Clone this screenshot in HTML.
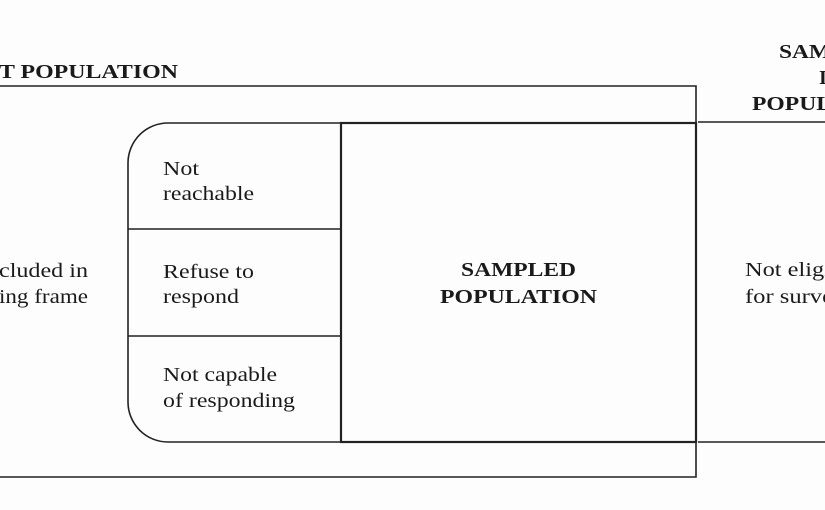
<!DOCTYPE html>
<html><head><meta charset="utf-8"><style>
html,body{margin:0;padding:0;background:#fdfdfd;}
svg{display:block}
text{font-family:"Liberation Serif",serif;fill:#1a1a1a;font-size:20px}
.b{font-weight:bold}
</style></head><body>
<svg width="825" height="510" viewBox="0 0 825 510" xmlns="http://www.w3.org/2000/svg">
<g fill="none" stroke="#222" stroke-width="1.6">
<path d="M0 86 H696 V477 H0"/>
<path d="M340 123 H168 A40 40 0 0 0 128 163 V402 A40 40 0 0 0 168 442 H340"/>
<path d="M128 229 H340 M128 336 H340"/>
<rect x="341" y="123" width="355" height="319" stroke-width="2.2"/>
<path d="M698 122 H825 M698 442 H825"/>
</g>
<text class="b" x="-1" y="78" textLength="179" lengthAdjust="spacingAndGlyphs">T POPULATION</text>
<text class="b" x="779" y="58" textLength="52" lengthAdjust="spacingAndGlyphs">SAM</text>
<text class="b" x="819" y="84">I</text>
<text class="b" x="752" y="110" textLength="80" lengthAdjust="spacingAndGlyphs">POPUL</text>
<text x="-1" y="277" textLength="89" lengthAdjust="spacingAndGlyphs">cluded in</text>
<text x="-1" y="303" textLength="89" lengthAdjust="spacingAndGlyphs">ing frame</text>
<text x="163" y="175" textLength="36" lengthAdjust="spacingAndGlyphs">Not</text>
<text x="163" y="200" textLength="91" lengthAdjust="spacingAndGlyphs">reachable</text>
<text x="163" y="278" textLength="91" lengthAdjust="spacingAndGlyphs">Refuse to</text>
<text x="163" y="303" textLength="76" lengthAdjust="spacingAndGlyphs">respond</text>
<text x="163" y="381" textLength="114" lengthAdjust="spacingAndGlyphs">Not capable</text>
<text x="163" y="407" textLength="132" lengthAdjust="spacingAndGlyphs">of responding</text>
<text class="b" x="461" y="276" textLength="115" lengthAdjust="spacingAndGlyphs">SAMPLED</text>
<text class="b" x="440" y="303" textLength="157" lengthAdjust="spacingAndGlyphs">POPULATION</text>
<text x="745" y="276" textLength="86" lengthAdjust="spacingAndGlyphs">Not eligi</text>
<text x="745" y="303" textLength="88" lengthAdjust="spacingAndGlyphs">for surve</text>
</svg>
</body></html>
